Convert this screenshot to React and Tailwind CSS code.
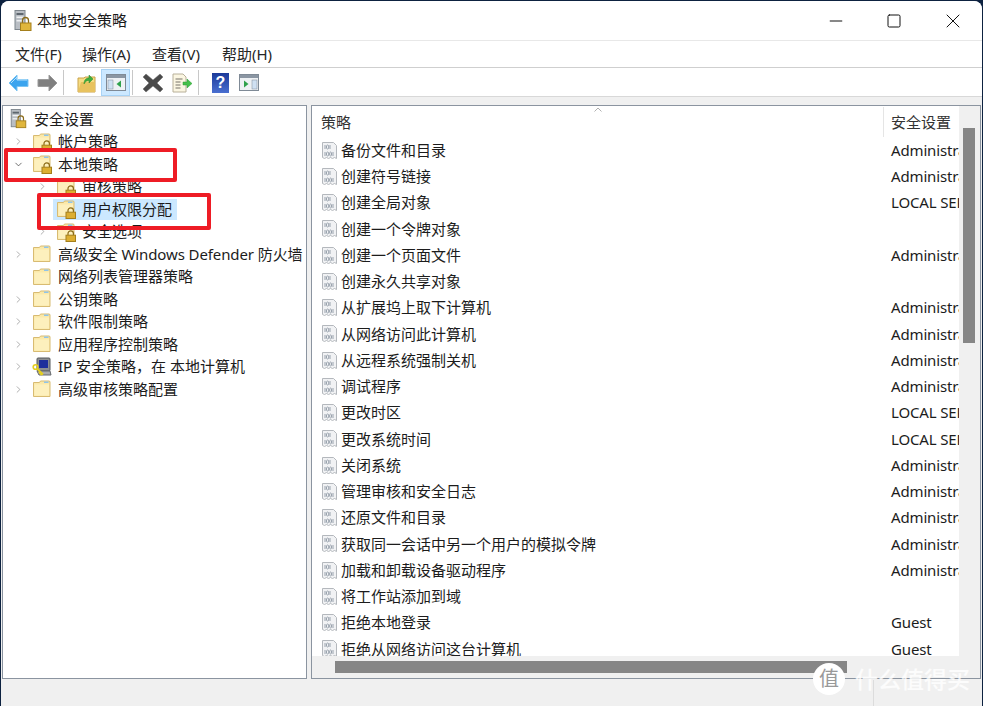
import React from "react";
import { ChevronRight, ChevronDown, Minus, Square, X } from "lucide-react";

const font = "font-['Noto_Sans','Noto_Sans_CJK_SC',sans-serif]";

function ServerLock({ className = "" }) {
  return (
    <svg viewBox="0 0 18 22" className={className}>
      <rect x="1" y="0.5" width="10" height="19" fill="#b9bec4" stroke="#7d858c" />
      <rect x="2.5" y="3" width="7" height="2" fill="#5e666e" />
      <rect x="2.5" y="6.5" width="7" height="1.5" fill="#eef0f2" />
      <rect x="2.5" y="10" width="7" height="1.5" fill="#eef0f2" />
      <path d="M8.5 13v-2.5a3 3 0 0 1 6 0V13" fill="none" stroke="#8a6a18" strokeWidth="1.3" />
      <rect x="6.5" y="13" width="10.5" height="7.5" fill="#e0b63c" stroke="#a47f1c" />
    </svg>
  );
}

function Folder({ lock }) {
  return (
    <svg viewBox="0 0 20 20" className="h-5 w-5 shrink-0">
      <path d="M1.5 3.5h6l1-1.5h9l.5 1V17.5H1.5z" fill="#fbe9a9" stroke="#d8bb72" />
      <path d="M2.5 5.5h14.5v11H2.5z" fill="#fdf0bd" />
      <rect x="12" y="2.5" width="4.5" height="1.5" fill="#8fc4ea" />
      {lock && (
        <g>
          <path d="M12 13.5v-2a2.7 2.7 0 0 1 5.4 0v2" fill="none" stroke="#8a6a18" strokeWidth="1.2" />
          <rect x="10" y="13.2" width="9.5" height="6.3" fill="#dcae32" stroke="#a47f1c" />
        </g>
      )}
    </svg>
  );
}

function IpIcon() {
  return (
    <svg viewBox="0 0 20 20" className="h-5 w-5 shrink-0">
      <rect x="5" y="1" width="13" height="13" rx="1" fill="#8d8f92" stroke="#55585c" />
      <rect x="7" y="3" width="9" height="8" fill="#1f2f9c" />
      <path d="M5 14h13l1 4H7z" fill="#a9abae" stroke="#66696d" />
      <circle cx="3.5" cy="10" r="2.3" fill="none" stroke="#e5cf1e" strokeWidth="1.6" />
      <path d="M5 11.5l6 6M8.5 15l-1.5 1.5M10 16.5l-1.5 1.5" stroke="#e5cf1e" strokeWidth="1.8" />
    </svg>
  );
}

function PolicyIcon() {
  return (
    <svg viewBox="0 0 17 19" className="h-[19px] w-[17px] shrink-0">
      <path d="M1.5 1.5h11l3 3v13l-2-1-2 1-2-1-2 1-2-1-2 1-2-1z" fill="#f1f2f4" stroke="#b4b8bd" />
      <g fill="none" stroke="#9aa3ae" strokeWidth="1">
        <path d="M4 4v4M9 4v4M4 11v4M12 11v4" />
        <ellipse cx="6.6" cy="6" rx="1.2" ry="2" />
        <ellipse cx="6.6" cy="13" rx="1.2" ry="2" />
        <ellipse cx="9.6" cy="13" rx="1" ry="2" />
      </g>
    </svg>
  );
}

function ToolIcons() {
  return (
    <div className="flex h-[29px] items-center pl-[7px]">
      <svg viewBox="0 0 21 18" className="h-[18px] w-[21px]">
        <path d="M1 9l8-8v4.5h11v7H9V17z" fill="#3ba4ee" stroke="#7cc4f2" />
        <path d="M3 9l6-6v3h10" fill="none" stroke="#b5e0fb" />
      </svg>
      <svg viewBox="0 0 21 18" className="ml-2 h-[18px] w-[21px]">
        <path d="M20 9l-8-8v4.5H1v7h11V17z" fill="#808080" stroke="#9a9a9a" />
      </svg>
      <div className="ml-[5px] h-[25px] w-px bg-[#c8c8c8]" />
      <svg viewBox="0 0 19 20" className="ml-[13px] h-5 w-[19px]">
        <path d="M1 5h6l1-1h10v15H1z" fill="#f6dc83" stroke="#c9a24a" />
        <path d="M1 19l3-10h14v10z" fill="#e8c25e" />
        <path d="M7 11c0-4 2-6 5-6V2l4 4-4 4V7.5c-2 0-4 1-5 3.5z" fill="#3fae3f" stroke="#2b8a2b" strokeWidth="0.5" />
      </svg>
      <div className="ml-[5px] flex h-[27px] w-[29px] items-center justify-center border border-[#a9d3f5] bg-[#cce8ff]">
        <svg viewBox="0 0 20 17" className="h-[17px] w-5">
          <rect x="0.5" y="0.5" width="19" height="16" fill="#eef1f4" stroke="#7f8a96" />
          <rect x="1" y="1" width="18" height="3" fill="#8b96a3" />
          <rect x="2" y="6" width="5" height="9" fill="#cfe0f2" stroke="#7f8a96" strokeWidth="0.5" />
          <path d="M15 6.5v7L10.5 10z" fill="#2fa14b" />
        </svg>
      </div>
      <div className="ml-[2px] h-[25px] w-px bg-[#c8c8c8]" />
      <svg viewBox="0 0 21 20" className="ml-[10px] h-5 w-[21px]">
        <path d="M3 1l7 6 7-6 3 3-6 6 6 6-3 3-7-6-7 6-3-3 6-6-6-6z" fill="#4a4a4a" stroke="#6a6a6a" strokeWidth="0.5" />
      </svg>
      <svg viewBox="0 0 21 20" className="ml-2 h-5 w-[21px]">
        <path d="M1 1h10l3 3v15H1z" fill="#fbf6e2" stroke="#b8b09a" />
        <path d="M3.5 6h7M3.5 9h5M3.5 12h5M3.5 15h5" stroke="#77736a" />
        <path d="M11 9h4V6l5 4.5-5 4.5v-3h-4z" fill="#45c04a" stroke="#2f9a35" strokeWidth="0.5" />
      </svg>
      <div className="ml-[5px] h-[25px] w-px bg-[#c8c8c8]" />
      <div className="ml-[13px] flex h-5 w-[17px] items-center justify-center bg-gradient-to-b from-[#1c3a9a] to-[#4a6fd0] text-[16px] font-bold leading-none text-white font-['Liberation_Sans',sans-serif]">?</div>
      <svg viewBox="0 0 20 17" className="ml-[10px] h-[17px] w-5">
        <rect x="0.5" y="0.5" width="19" height="16" fill="#eef1f4" stroke="#7f8a96" />
        <rect x="1" y="1" width="18" height="3" fill="#8b96a3" />
        <rect x="13" y="6" width="5" height="9" fill="#cfe0f2" stroke="#7f8a96" strokeWidth="0.5" />
        <path d="M5 6.5v7L9.5 10z" fill="#2fa14b" />
      </svg>
    </div>
  );
}

const tree = [
  { label: "帐户策略", indent: 1, arrow: "right", lock: true },
  { label: "本地策略", indent: 1, arrow: "down", lock: true },
  { label: "审核策略", indent: 2, arrow: "right", lock: true },
  { label: "用户权限分配", indent: 2, lock: true, selected: true },
  { label: "安全选项", indent: 2, arrow: "right", lock: true },
  { label: "高级安全 Windows Defender 防火墙", indent: 1, arrow: "right", tight: true },
  { label: "网络列表管理器策略", indent: 1 },
  { label: "公钥策略", indent: 1, arrow: "right" },
  { label: "软件限制策略", indent: 1, arrow: "right" },
  { label: "应用程序控制策略", indent: 1, arrow: "right" },
  { label: "IP 安全策略，在 本地计算机", indent: 1, arrow: "right", ip: true },
  { label: "高级审核策略配置", indent: 1, arrow: "right" },
];

const policies = [
  ["备份文件和目录", "Administrators"],
  ["创建符号链接", "Administrators"],
  ["创建全局对象", "LOCAL SERVICE"],
  ["创建一个令牌对象", ""],
  ["创建一个页面文件", "Administrators"],
  ["创建永久共享对象", ""],
  ["从扩展坞上取下计算机", "Administrators"],
  ["从网络访问此计算机", "Administrators"],
  ["从远程系统强制关机", "Administrators"],
  ["调试程序", "Administrators"],
  ["更改时区", "LOCAL SERVICE"],
  ["更改系统时间", "LOCAL SERVICE"],
  ["关闭系统", "Administrators"],
  ["管理审核和安全日志", "Administrators"],
  ["还原文件和目录", "Administrators"],
  ["获取同一会话中另一个用户的模拟令牌", "Administrators"],
  ["加载和卸载设备驱动程序", "Administrators"],
  ["将工作站添加到域", ""],
  ["拒绝本地登录", "Guest"],
  ["拒绝从网络访问这台计算机", "Guest"],
];

function TreeRow({ row }) {
  return (
    <div className={`flex h-[22.5px] items-center ${row.indent === 2 ? "pl-[33px]" : "pl-[9px]"}`}>
      <span className="flex w-[13px] shrink-0 justify-center text-[#8a8a8a]">
        {row.arrow === "right" && <ChevronRight size={11} strokeWidth={1.5} />}
        {row.arrow === "down" && <ChevronDown size={11} strokeWidth={1.5} className="text-[#333]" />}
      </span>
      <span className={`flex items-center pr-[5px] ${row.indent === 2 ? "ml-[4px] pl-[3px]" : "ml-[7px]"} ${row.selected ? "bg-[#cce8ff]" : ""}`}>
        {row.ip ? <IpIcon /> : <Folder lock={row.lock} />}
        <span className={`ml-[6px] whitespace-nowrap text-[15px] leading-[21px] text-[#1c1c1c] ${row.tight ? "tracking-[-0.1px]" : ""}`}>
          {row.label}
        </span>
      </span>
    </div>
  );
}

export default function App() {
  return (
    <div className={`h-[706px] w-[983px] overflow-hidden bg-[#0d2240] ${font}`}>
      <div className="relative ml-[1px] mt-[1px] flex h-[706px] w-[981px] flex-col overflow-hidden rounded-t-[8px] bg-[#f0f0f0]">
        {/* title bar */}
        <div className="flex h-[39px] shrink-0 items-center bg-white pl-[13px]">
          <ServerLock className="h-[22px] w-[18px]" />
          <span className="ml-[5px] text-[15px] text-[#1a1a1a]">本地安全策略</span>
          <div className="ml-auto flex items-center pr-[17px] text-[#111]">
            <Minus size={20} strokeWidth={1.2} className="mr-[40px]" />
            <Square size={16} strokeWidth={1.5} className="mr-[39px]" />
            <X size={24} strokeWidth={1} />
          </div>
        </div>
        {/* menu */}
        <div className="flex h-[27px] shrink-0 items-center border-t border-[#e8e8e8] bg-white pl-[14px] text-[15px] text-[#262626]">
          <span className="w-[67px]">文件(F)</span>
          <span className="w-[70px]">操作(A)</span>
          <span className="w-[70px]">查看(V)</span>
          <span>帮助(H)</span>
        </div>
        {/* toolbar */}
        <div className="h-[30px] shrink-0 border-t border-b border-t-[#cfcfcf] border-b-[#d8d8d8] bg-white">
          <ToolIcons />
        </div>
        {/* panes */}
        <div className="flex min-h-0 flex-1 pb-[28px] pl-[1px] pr-[1px] pt-[8px]">
          <div className="w-[305px] shrink-0 overflow-hidden border border-[#8b94a0] bg-white pt-[2px]">
            <div className="flex h-[22.5px] items-center pl-[7px]">
              <ServerLock className="h-[20px] w-[17px]" />
              <span className="ml-[7px] text-[15px] text-[#1c1c1c]">安全设置</span>
            </div>
            {tree.map((row) => (
              <TreeRow key={row.label} row={row} />
            ))}
          </div>
          <div className="ml-[4px] flex min-w-0 flex-1 flex-col border border-[#8b94a0] bg-white">
            <div className="flex min-h-0 flex-1">
              <div className="min-w-0 flex-1 overflow-hidden">
                <div className="relative flex h-[31px] items-center pt-[1px] text-[15px] text-[#333]">
                  <svg viewBox="0 0 8 5" className="absolute left-[282px] top-[1px] h-[5px] w-[8px]">
                    <path d="M0.5 4.5L4 1l3.5 3.5" fill="none" stroke="#b0b0b0" />
                  </svg>
                  <span className="w-[571px] pl-[9px]">策略</span>
                  <span className="flex h-full items-center border-l border-[#e5e5e5] pl-[7px]">安全设置</span>
                </div>
                {policies.map(([name, value]) => (
                  <div key={name} className="flex h-[26.25px] items-center text-[15px] text-[#1c1c1c]">
                    <div className="flex w-[571px] shrink-0 items-center pl-[9px]">
                      <PolicyIcon />
                      <span className="ml-[3px] whitespace-nowrap">{name}</span>
                    </div>
                    <span className="whitespace-nowrap pl-[8px] tracking-[-0.15px]">{value}</span>
                  </div>
                ))}
              </div>
              {/* vertical scrollbar */}
              <div className="w-[21px] shrink-0 bg-[#f0f0f0] pl-[4px] pt-[22px]">
                <div className="h-[215px] w-[12px] bg-[#868686]" />
              </div>
            </div>
            {/* horizontal scrollbar */}
            <div className="h-[22px] shrink-0 bg-[#f0f0f0] pl-[23px] pt-[5px]">
              <div className="h-[12px] w-[512px] bg-[#868686]" />
            </div>
          </div>
        </div>
        {/* status bar divider */}
        <div className="absolute bottom-0 right-[108px] h-[27px] w-px bg-[#dcdcdc]" />

        {/* red callouts */}
        <div className="absolute left-[3px] top-[147px] h-[34px] w-[173px] rounded-[2px] border-[4px] border-[#ee1c25]" />
        <div className="absolute left-[36px] top-[192px] h-[37px] w-[174px] rounded-[2px] border-[4px] border-[#ee1c25]" />

        {/* watermark */}
        <div className="absolute bottom-[12px] left-[812px] flex items-center">
          <span className="flex h-[32px] w-[32px] items-center justify-center rounded-full bg-white text-[20px] text-[#999]">值</span>
          <span className="ml-[10px] whitespace-nowrap text-[23px] font-medium leading-[32px] text-white/80">什么值得买</span>
        </div>
      </div>
    </div>
  );
}
